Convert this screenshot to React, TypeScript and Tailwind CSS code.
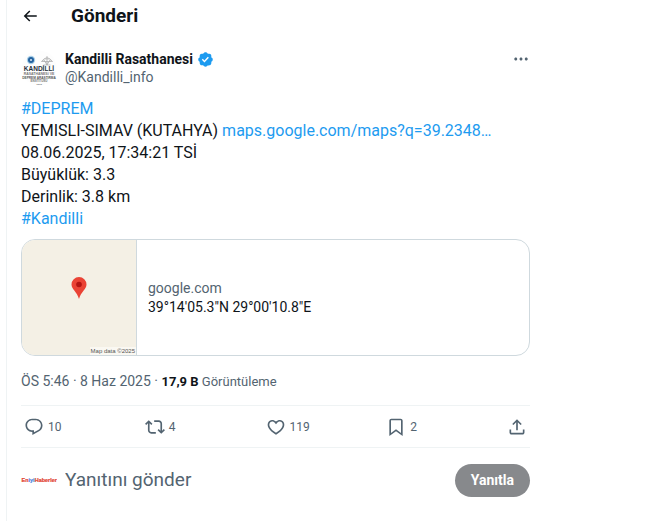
import type { ReactNode } from 'react';

const PATHS = {
  back: 'M7.414 13l5.043 5.04-1.414 1.42L3.586 12l7.457-7.46 1.414 1.42L7.414 11H21v2H7.414z',
  reply:
    'M1.751 10c0-4.42 3.584-8 8.005-8h4.366c4.49 0 8.129 3.64 8.129 8.13 0 2.96-1.607 5.68-4.196 7.11l-8.054 4.46v-3.69h-.067c-4.49.1-8.183-3.51-8.183-8.01zm8.005-6c-3.317 0-6.005 2.69-6.005 6 0 3.37 2.77 6.08 6.138 6.01l.351-.01h1.761v2.3l5.087-2.81c1.951-1.08 3.163-3.13 3.163-5.36 0-3.39-2.744-6.13-6.129-6.13H9.756z',
  repost:
    'M4.5 3.88l4.432 4.14-1.364 1.46L5.5 7.55V16c0 1.1.896 2 2 2H13v2H7.5c-2.209 0-4-1.79-4-4V7.55L1.432 9.48.068 8.02 4.5 3.88zM16.5 6H11V4h5.5c2.209 0 4 1.79 4 4v8.45l2.068-1.93 1.364 1.46-4.432 4.14-4.432-4.14 1.364-1.46 2.068 1.93V8c0-1.1-.896-2-2-2z',
  like: 'M16.697 5.5c-1.222-.06-2.679.51-3.89 2.16l-.805 1.09-.806-1.09C9.984 6.01 8.526 5.44 7.304 5.5c-1.243.07-2.349.78-2.91 1.91-.552 1.12-.633 2.78.479 4.82 1.074 1.97 3.257 4.27 7.129 6.61 3.87-2.34 6.052-4.64 7.126-6.61 1.111-2.04 1.03-3.7.477-4.82-.561-1.13-1.666-1.84-2.908-1.91zm4.187 7.69c-1.351 2.48-4.001 5.12-8.379 7.67l-.503.3-.504-.3c-4.379-2.55-7.029-5.19-8.382-7.67-1.36-2.5-1.41-4.86-.514-6.67.887-1.79 2.647-2.91 4.601-3.01 1.651-.09 3.368.56 4.798 2.01 1.429-1.45 3.146-2.1 4.796-2.01 1.954.1 3.714 1.22 4.601 3.01.896 1.81.846 4.17-.514 6.67z',
  bookmark:
    'M4 4.5C4 3.12 5.119 2 6.5 2h11C18.881 2 20 3.12 20 4.5v18.44l-8-5.71-8 5.71V4.5zM6.5 4c-.276 0-.5.22-.5.5v14.56l6-4.29 6 4.29V4.5c0-.28-.224-.5-.5-.5h-11z',
  share:
    'M12 2.59l5.7 5.7-1.41 1.42L13 6.41V16h-2V6.41l-3.3 3.3-1.41-1.42L12 2.59zM21 15l-.02 3.51c0 1.38-1.12 2.49-2.5 2.49H5.5C4.11 21 3 19.88 3 18.5V15h2v3.5c0 .28.22.5.5.5h12.98c.28 0 .5-.22.5-.5L19 15h2z',
  more: 'M3 12c0-1.1.9-2 2-2s2 .9 2 2-.9 2-2 2-2-.9-2-2zm9 2c1.1 0 2-.9 2-2s-.9-2-2-2-2 .9-2 2 .9 2 2 2zm7 0c1.1 0 2-.9 2-2s-.9-2-2-2-2 .9-2 2 .9 2 2 2z',
};

const VERIFIED =
  'M20.396 11c-.018-.646-.215-1.275-.57-1.816-.354-.54-.852-.972-1.438-1.246.223-.607.27-1.264.14-1.897-.131-.634-.437-1.218-.882-1.687-.47-.445-1.053-.75-1.687-.882-.633-.13-1.29-.083-1.897.14-.273-.587-.704-1.086-1.245-1.44S11.647 1.62 11 1.604c-.646.017-1.273.213-1.813.568s-.969.854-1.24 1.44c-.608-.223-1.267-.272-1.902-.14-.635.13-1.22.436-1.69.882-.445.47-.749 1.055-.878 1.688-.13.633-.08 1.29.144 1.896-.587.274-1.087.705-1.443 1.245-.356.54-.555 1.17-.574 1.817.02.647.218 1.276.574 1.817.356.54.856.972 1.443 1.245-.224.606-.274 1.263-.144 1.896.13.634.433 1.218.877 1.688.47.443 1.054.747 1.687.878.633.132 1.29.084 1.897-.136.274.586.705 1.084 1.246 1.439.54.354 1.17.551 1.816.569.647-.016 1.276-.213 1.817-.567s.972-.854 1.245-1.44c.604.239 1.266.296 1.903.164.636-.132 1.22-.447 1.68-.907.46-.46.776-1.044.908-1.681s.075-1.299-.165-1.903c.586-.274 1.084-.705 1.439-1.246.354-.54.551-1.17.569-1.816zM9.662 14.85l-3.429-3.428 1.293-1.302 2.072 2.072 4.4-4.794 1.347 1.246z';

function Icon({ name, className = 'size-5' }: { name: keyof typeof PATHS; className?: string }) {
  return (
    <svg viewBox="0 0 24 24" className={`shrink-0 fill-current ${className}`} aria-hidden="true">
      <path d={PATHS[name]} />
    </svg>
  );
}

function Action({ icon, label, count }: { icon: keyof typeof PATHS; label: string; count: string }) {
  return (
    <div className="flex-1">
      <button type="button" aria-label={label} className="flex items-center gap-1 text-xs">
        <Icon name={icon} />
        {count}
      </button>
    </div>
  );
}

function TextLink({ children }: { children: ReactNode }) {
  return (
    <a href="#" className="text-[#1d9bf0]">
      {children}
    </a>
  );
}

function KandilliLogo() {
  return (
    <svg viewBox="0 0 36 36" className="size-9 shrink-0" role="img" aria-label="Kandilli Rasathanesi">
      <circle cx="18" cy="18" r="17.5" fill="#fdfdfd" />
      <circle cx="10" cy="10" r="4.2" fill="#a9cfe8" />
      <circle cx="10" cy="10" r="3" fill="#23629f" />
      <path d="M9 10h2M10 9v2" stroke="#fff" strokeWidth=".8" />
      <path d="M20.500 11.500q5.500-7.500 11 0zM26 6v9M22.500 15h7M23 10l3 5 3-5" fill="#e4e4e4" stroke="#a8a8a8" strokeWidth=".7" />
      <g fontFamily="'Liberation Sans', Arial, sans-serif" fontWeight="700" textAnchor="middle">
        <text x="18" y="21" fontSize="6.500" fill="#26303a">KANDİLLİ</text>
        <text x="18" y="25" fontSize="3.500" fill="#777">RASATHANESİ VE</text>
        <text x="18" y="28.500" fontSize="3.200" fill="#555">DEPREM ARAŞTIRMA</text>
        <text x="18" y="31.500" fontSize="3" fill="#777">ENSTİTÜSÜ</text>
        <text x="18" y="34.500" fontSize="2.500" fill="#888">1868</text>
      </g>
    </svg>
  );
}

function HaberlerLogo() {
  return (
    <svg viewBox="0 0 36 36" className="size-9 shrink-0" role="img" aria-label="EniyiHaberler">
      <text x="0.500" y="20" fontSize="5.500" fontWeight="700" fontFamily="'Liberation Sans', Arial, sans-serif" fill="#e2402f" stroke="#e2402f" strokeWidth=".2">
        En<tspan fill="#4a7fe0" stroke="#4a7fe0">iyi</tspan>Haberler
      </text>
    </svg>
  );
}

export default function App() {
  return (
    <div className="min-h-screen bg-white pl-1.5 font-[Roboto,sans-serif] text-[#0f1419]">
      <main className="min-h-screen max-w-[540px] border-l border-[#eff3f4] pr-4 pl-3.5">
        <header className="flex h-8 items-center gap-8">
          <button type="button" aria-label="Geri">
            <Icon name="back" className="size-[18px]" />
          </button>
          <h1 className="text-[19px] font-bold">Gönderi</h1>
        </header>

        <article>
          <div className="flex items-start gap-2 pt-[18px]">
            <KandilliLogo />
            <div className="min-w-0 flex-1 text-sm leading-[18px]">
              <div className="flex items-center gap-1">
                <span className="font-bold">Kandilli Rasathanesi</span>
                <svg viewBox="0 0 22 22" className="size-[17px] fill-[#1d9bf0]" role="img" aria-label="Onaylı hesap">
                  <path d={VERIFIED} />
                </svg>
              </div>
              <div className="text-[#536471]">@Kandilli_info</div>
            </div>
            <button type="button" aria-label="Daha fazla" className="text-[#536471]">
              <Icon name="more" className="size-[18px]" />
            </button>
          </div>

          <p className="pt-3 text-base leading-[22px]">
            <TextLink>#DEPREM</TextLink>
            <br />
            YEMISLI-SIMAV (KUTAHYA) <TextLink>maps.google.com/maps?q=39.2348…</TextLink>
            <br />
            08.06.2025, 17:34:21 TSİ
            <br />
            Büyüklük: 3.3
            <br />
            Derinlik: 3.8 km
            <br />
            <TextLink>#Kandilli</TextLink>
          </p>

          <a href="#" className="mt-[9px] flex h-[117px] overflow-hidden rounded-[14px] border border-[#cfd9de]">
            <div className="relative flex w-[115px] items-center justify-center border-r border-[#cfd9de] bg-[#f4f0e5]">
              <svg viewBox="0 0 16 24" className="mb-5 h-6 w-4" aria-hidden="true">
                <path d="M8 1a7.500 7.500 0 0 0-7.500 7.500c0 5 5.500 7 7.500 14.500 2-7.500 7.500-9.500 7.500-14.500A7.500 7.500 0 0 0 8 1z" fill="#ea4335" />
                <circle cx="8" cy="8.500" r="2.800" fill="#b31412" />
              </svg>
              <span className="absolute right-0 bottom-0 bg-[#faf8f2] px-px font-['Liberation_Sans',sans-serif] text-[6px] leading-[8px] text-[#555]">
                Map data ©2025
              </span>
            </div>
            <div className="flex flex-1 flex-col justify-center px-[11px] text-sm leading-[19px]">
              <span className="text-[#536471]">google.com</span>
              <span>39°14'05.3"N 29°00'10.8"E</span>
            </div>
          </a>

          <div className="pt-4 pb-3.5 text-sm leading-[18px] text-[#536471]">
            <time dateTime="2025-06-08T17:46">ÖS 5:46 · 8 Haz 2025</time> ·{' '}
            <span className="text-[13px]">
              <b className="text-[#0f1419]">17,9 B</b> Görüntüleme
            </span>
          </div>

          <div className="flex h-[43px] items-center border-y border-[#eff3f4] px-[3px] text-[#536471]">
            <Action icon="reply" label="Yanıtla" count="10" />
            <Action icon="repost" label="Yeniden gönder" count="4" />
            <Action icon="like" label="Beğen" count="119" />
            <Action icon="bookmark" label="Yer işareti" count="2" />
            <button type="button" aria-label="Paylaş">
              <Icon name="share" />
            </button>
          </div>
        </article>

        <form className="flex items-center gap-2 pt-3.5">
          <HaberlerLogo />
          <input
            type="text"
            aria-label="Yanıtını gönder"
            placeholder="Yanıtını gönder"
            className="min-w-0 flex-1 text-[19px] outline-none placeholder:text-[#536471]"
          />
          <button type="button" className="h-[33px] rounded-full bg-[#87898c] px-4 text-sm font-bold text-white">
            Yanıtla
          </button>
        </form>
      </main>
    </div>
  );
}
